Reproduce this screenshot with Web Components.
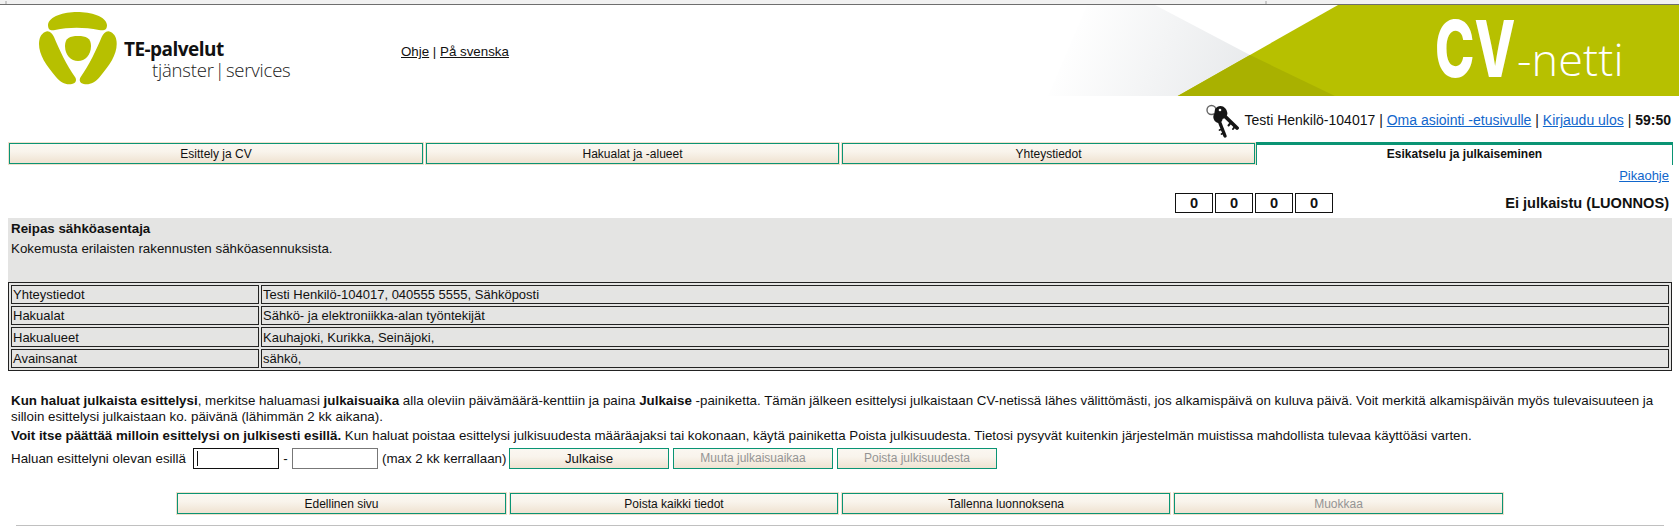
<!DOCTYPE html>
<html lang="fi">
<head>
<meta charset="utf-8">
<title>CV-netti</title>
<style>
  html, body { margin: 0; padding: 0; background: #fff; }
  body { font: 13.33px "Liberation Sans", Arial, sans-serif; color: #111; overflow: hidden; height: 531px; }
</style>
</head>
<body>
<cv-page></cv-page>
<script>
class CvButton extends HTMLElement {
  constructor() {
    super();
    this.attachShadow({ mode: "open" });
  }

  connectedCallback() {
    this.shadowRoot.innerHTML = `
      <style>
        :host { display: block; box-sizing: border-box; border: var(--btn-outer, 1px) solid #f1dfcc; font-size: var(--btn-size, 12px); }
        div {
          box-sizing: border-box;
          height: 100%;
          display: flex;
          align-items: center;
          justify-content: center;
          border: 1px solid #0a9474;
          background: linear-gradient(#fbf7f1 0%, #f9f4ec 40%, #efe2d1 100%);
          color: #111;
          cursor: pointer;
        }
        :host([disabled]) div { color: #949494; cursor: default; }
      </style>
      <div><slot></slot></div>
    `;
  }
}

class CvHeader extends HTMLElement {
  constructor() {
    super();
    this.attachShadow({ mode: "open" });
  }

  connectedCallback() {
    this.shadowRoot.innerHTML = `
      <style>
        :host { display: block; }
        .strip { height: 4px; background: #f1f1f1; border-bottom: 1px solid #6e6e6e; position: relative; }
        .strip i { position: absolute; top: 1px; width: 2px; height: 3px; background: #c9c9c9; }
        .row { display: flex; height: 91px; }
        .logo { margin: 6px 0 0 39px; flex: none; }
        .brand { margin-left: 7px; padding-top: 33px; width: 180px; flex: none; white-space: nowrap; color: #1a1a1a; }
        .te { font: 700 19px/22px "Open Sans", sans-serif; letter-spacing: -.55px; color: #111; }
        .sv { font: 300 18.5px/20px "Open Sans", sans-serif; margin-left: 28px; letter-spacing: -.2px; word-spacing: -3.4px; }
        nav { margin-left: 97px; padding-top: 39px; width: 300px; flex: none; }
        nav a { color: #111; }
        .banner { margin-left: auto; width: 639px; position: relative; flex: none; }
        .banner svg { position: absolute; inset: 0; }
        .name { position: absolute; left: 395px; top: 0; display: flex; color: #fff; white-space: nowrap; }
        .cv { font: 800 78px/91px Inter, sans-serif; display: block; transform: scaleX(.68); transform-origin: left center; margin: -2px -36px 0 0; }
        .netti { font: 300 45px/91px "Open Sans", sans-serif; display: block; margin: 8px 0 0 0; letter-spacing: .1px; }
      </style>
      <div class="strip"><i style="left:5px"></i><i style="left:1265px"></i></div>
      <div class="row">
        <svg class="logo" width="78" height="74" viewBox="0 0 78 74" fill="#b7c000">
          <path d="M9 14C10 5 25 1 38 1C52 1 67 5 68 14C68 19 65 20 60 19C45 16 30 16 16 19C12 20 9 19 9 14Z"/>
          <path d="M6 21C10 19 13 22 15 26C20 38 28 55 36 66C38 69 37 72 33 73C27 74 22 72 17 66C7 54 0 44 0 33C0 27 2 23 6 21Z"/>
          <path d="M6 21C10 19 13 22 15 26C20 38 28 55 36 66C38 69 37 72 33 73C27 74 22 72 17 66C7 54 0 44 0 33C0 27 2 23 6 21Z" transform="translate(77.7 0) scale(-1 1)"/>
          <path d="M39 25C47 25 52 27 52 35C52 44 46 50 39 50C32 50 26 44 26 35C26 27 31 25 39 25Z"/>
        </svg>
        <div class="brand">
          <div class="te">TE-palvelut</div>
          <div class="sv">tjänster | services</div>
        </div>
        <nav><a href="#">Ohje</a> | <a href="#">På svenska</a></nav>
        <div class="banner">
          <svg width="639" height="91" viewBox="0 0 639 91">
            <defs>
              <linearGradient id="fade" x1="20" y1="45" x2="195" y2="119" gradientUnits="userSpaceOnUse">
                <stop offset="0" stop-color="#fff"/>
                <stop offset="1" stop-color="#e7e9eb"/>
              </linearGradient>
            </defs>
            <polygon points="8,91 47,0 115,0 210,50 137.7,91" fill="url(#fade)"/>
            <polygon points="298,0 639,0 639,91 137.7,91" fill="#b7c000"/>
            <polygon points="137.7,91 210,50 295,91" fill="#a9b100"/>
          </svg>
          <div class="name"><span class="cv">CV</span><span class="netti">-netti</span></div>
        </div>
      </div>
    `;
  }
}

class CvSession extends HTMLElement {
  constructor() {
    super();
    this.attachShadow({ mode: "open" });
  }

  connectedCallback() {
    this.shadowRoot.innerHTML = `
      <style>
        :host { display: flex; height: 46px; justify-content: flex-end; align-items: flex-start; padding-right: 8px; font-size: 14px; }
        svg { margin: 8px 6px 0 0; flex: none; }
        .txt { margin-top: 16px; white-space: nowrap; }
        a { color: #1166cc; }
      </style>
      <svg width="33" height="34" viewBox="0 0 33 34">
        <circle cx="5.500" cy="6" r="4.500" fill="none" stroke="#666" stroke-width="1.400"/>
        <g stroke="#151515" fill="#151515" stroke-linecap="round">
          <ellipse cx="12" cy="13.500" rx="4.600" ry="5.600" stroke="none" transform="rotate(-20 12 13.500)"/>
          <path d="M12 14L19 32" stroke-width="3.400" fill="none"/>
          <path d="M16.500 25l-3 1M18 29l-2.500 1" stroke-width="1.800" fill="none"/>
          <ellipse cx="15" cy="8.500" rx="6" ry="6.800" stroke="none" transform="rotate(-45 15 8.500)"/>
          <path d="M15 8.500L31 24" stroke-width="3.800" fill="none"/>
          <path d="M25 18.500l-2.500 3M29 22.500l-2 2.500" stroke-width="2" fill="none"/>
        </g>
        <circle cx="14" cy="6" r="1.300" fill="#fff"/>
      </svg>
      <div class="txt">Testi Henkilö-104017 | <a href="#">Oma asiointi -etusivulle</a> | <a href="#">Kirjaudu ulos</a> | <b>59:50</b></div>
    `;
  }
}

class CvTabs extends HTMLElement {
  constructor() {
    super();
    this.attachShadow({ mode: "open" });
  }

  connectedCallback() {
    this.shadowRoot.innerHTML = `
      <style>
        :host {
          display: grid;
          grid-template-columns: 416px 415px 415px 416px;
          column-gap: 1px;
          height: 23px;
          margin-left: 8px;
        }
        .on {
          box-sizing: border-box;
          margin-left: -1px;
          border: 1px solid #0a9474;
          border-top: 3px solid #0a9474;
          border-bottom: 0;
          display: flex;
          align-items: center;
          justify-content: center;
          font-size: 12px;
          font-weight: bold;
          padding-bottom: 2px;
        }
      </style>
      <cv-button>Esittely ja CV</cv-button>
      <cv-button>Hakualat ja -alueet</cv-button>
      <cv-button>Yhteystiedot</cv-button>
      <div class="on">Esikatselu ja julkaiseminen</div>
    `;
  }
}

class CvStatus extends HTMLElement {
  constructor() {
    super();
    this.attachShadow({ mode: "open" });
  }

  connectedCallback() {
    this.shadowRoot.innerHTML = `
      <style>
        :host { display: block; height: 53px; padding-right: 10px; }
        .help { text-align: right; height: 28px; line-height: 22px; font-size: 13px; }
        a { color: #1166cc; }
        .row { display: flex; justify-content: flex-end; align-items: center; height: 20px; font-weight: bold; font-size: 14.6px; }
        .num { box-sizing: border-box; width: 38px; height: 20px; border: 1px solid #111; margin-right: 2px; display: flex; align-items: center; justify-content: center; }
        .st { width: 334px; text-align: right; }
      </style>
      <div class="help"><a href="#">Pikaohje</a></div>
      <div class="row">
        <span class="num">0</span><span class="num">0</span><span class="num">0</span><span class="num">0</span>
        <span class="st">Ei julkaistu (LUONNOS)</span>
      </div>
    `;
  }
}

class CvPreview extends HTMLElement {
  constructor() {
    super();
    this.attachShadow({ mode: "open" });
  }

  connectedCallback() {
    this.shadowRoot.innerHTML = `
      <style>
        :host { display: block; margin: 0 7px 0 8px; background: #e4e4e3; }
        h2 { margin: 0; font-size: 13.33px; line-height: 20px; padding: 1px 3px 0; }
        p { margin: 0; line-height: 20px; padding: 0 3px; height: 43px; }
        table { width: 100%; font-size: 13px; border-collapse: separate; border-spacing: 2px; border: 1px solid #222; table-layout: fixed; }
        td { border: 1px solid #222; padding: 0 1px; height: 17px; line-height: 17px; }
        .k { width: 244px; }
        tr.tall td { height: 18px; }
      </style>
      <h2>Reipas sähköasentaja</h2>
      <p>Kokemusta erilaisten rakennusten sähköasennuksista.</p>
      <table>
        <tr><td class="k">Yhteystiedot</td><td>Testi Henkilö-104017, 040555 5555, Sähköposti</td></tr>
        <tr><td class="k">Hakualat</td><td>Sähkö- ja elektroniikka-alan työntekijät</td></tr>
        <tr class="tall"><td class="k">Hakualueet</td><td>Kauhajoki, Kurikka, Seinäjoki,</td></tr>
        <tr><td class="k">Avainsanat</td><td>sähkö,</td></tr>
      </table>
    `;
  }
}

class CvPublish extends HTMLElement {
  constructor() {
    super();
    this.attachShadow({ mode: "open" });
  }

  connectedCallback() {
    this.shadowRoot.innerHTML = `
      <style>
        :host { display: block; margin: 22px 7px 0 11px; }
        p { margin: 0 0 3px; line-height: 16px; }
        .form { display: flex; align-items: center; height: 22px; margin-top: 3px; white-space: nowrap; --btn-size: 13.33px; --btn-outer: 0px; }
        input { box-sizing: border-box; width: 86px; height: 21px; border: 1px solid #777; padding: 0; margin: 0; background: #fff; outline: 0; }
        input.focus {
          border-color: #111;
          background: linear-gradient(#111, #111) 3px center / 1px 15px no-repeat #fff;
        }
        .dash { width: 13px; text-align: center; }
        .lbl { width: 182px; }
        .max { margin-left: 4px; width: 127px; }
        cv-button { width: 160px; height: 21px; margin-right: 4px; }
        cv-button[disabled] { --btn-size: 12px; }
      </style>
      <p><b>Kun haluat julkaista esittelysi</b>, merkitse haluamasi <b>julkaisuaika</b> alla oleviin päivämäärä-kenttiin ja paina <b>Julkaise</b> -painiketta. Tämän jälkeen esittelysi julkaistaan CV-netissä lähes välittömästi, jos alkamispäivä on kuluva päivä. Voit merkitä alkamispäivän myös tulevaisuuteen ja silloin esittelysi julkaistaan ko. päivänä (lähimmän 2 kk aikana).</p>
      <p><b>Voit itse päättää milloin esittelysi on julkisesti esillä.</b> Kun haluat poistaa esittelysi julkisuudesta määräajaksi tai kokonaan, käytä painiketta Poista julkisuudesta. Tietosi pysyvät kuitenkin järjestelmän muistissa mahdollista tulevaa käyttöäsi varten.</p>
      <div class="form">
        <span class="lbl">Haluan esittelyni olevan esillä</span>
        <input class="focus" type="text" aria-label="Alkaa">
        <span class="dash">-</span>
        <input type="text" aria-label="Päättyy">
        <span class="max">(max 2 kk kerrallaan)</span>
        <cv-button>Julkaise</cv-button>
        <cv-button disabled>Muuta julkaisuaikaa</cv-button>
        <cv-button disabled>Poista julkisuudesta</cv-button>
      </div>
    `;
  }
}

class CvFooter extends HTMLElement {
  constructor() {
    super();
    this.attachShadow({ mode: "open" });
  }

  connectedCallback() {
    this.shadowRoot.innerHTML = `
      <style>
        :host { display: block; margin-top: 23px; }
        .btns {
          display: grid;
          grid-template-columns: 331px 330px 330px 331px;
          column-gap: 2px;
          height: 23px;
          margin-left: 176px;
        }
        hr { margin: 10px 15px 0 16px; border: 0; height: 1px; background: #c0c0c0; }
      </style>
      <div class="btns">
        <cv-button>Edellinen sivu</cv-button>
        <cv-button>Poista kaikki tiedot</cv-button>
        <cv-button>Tallenna luonnoksena</cv-button>
        <cv-button disabled>Muokkaa</cv-button>
      </div>
      <hr>
    `;
  }
}

class CvPage extends HTMLElement {
  constructor() {
    super();
    this.attachShadow({ mode: "open" });
  }

  connectedCallback() {
    this.shadowRoot.innerHTML = `
      <style>:host { display: block; }</style>
      <cv-header></cv-header>
      <cv-session></cv-session>
      <cv-tabs></cv-tabs>
      <cv-status></cv-status>
      <cv-preview></cv-preview>
      <cv-publish></cv-publish>
      <cv-footer></cv-footer>
    `;
  }
}

customElements.define("cv-button", CvButton);
customElements.define("cv-header", CvHeader);
customElements.define("cv-session", CvSession);
customElements.define("cv-tabs", CvTabs);
customElements.define("cv-status", CvStatus);
customElements.define("cv-preview", CvPreview);
customElements.define("cv-publish", CvPublish);
customElements.define("cv-footer", CvFooter);
customElements.define("cv-page", CvPage);
</script>
</body>
</html>
